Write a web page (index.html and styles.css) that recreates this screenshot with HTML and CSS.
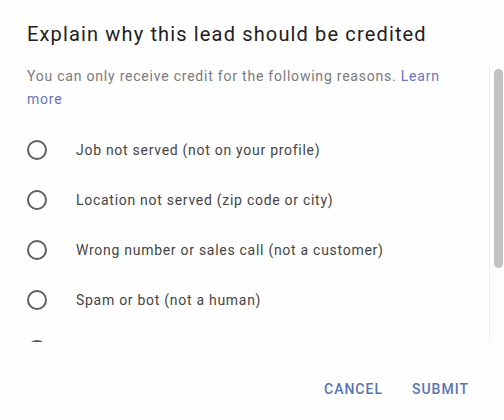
FILE: index.html
```html
<!DOCTYPE html>
<html lang="en">
<head>
<meta charset="utf-8">
<title>Explain why this lead should be credited</title>
<link rel="stylesheet" href="styles.css">
</head>
<body>
<div class="dialog">
  <h1 class="dialog-title">Explain why this lead should be credited</h1>
  <div class="dialog-body">
    <div class="scroll-content">
      <p class="intro">You can only receive credit for the following reasons. <a href="#" class="link">Learn more</a></p>
      <ul class="reasons">
        <li class="reason"><span class="radio"></span><span class="reason-label">Job not served (not on your profile)</span></li>
        <li class="reason"><span class="radio"></span><span class="reason-label">Location not served (zip code or city)</span></li>
        <li class="reason"><span class="radio"></span><span class="reason-label">Wrong number or sales call (not a customer)</span></li>
        <li class="reason"><span class="radio"></span><span class="reason-label">Spam or bot (not a human)</span></li>
        <li class="reason"><span class="radio"></span></li>
      </ul>
    </div>
    <div class="scrollbar"><div class="scrollbar-thumb"></div></div>
  </div>
  <div class="dialog-actions">
    <button class="action" type="button">Cancel</button>
    <button class="action" type="button">Submit</button>
  </div>
</div>
</body>
</html>
```
FILE: styles.css
```css
html, body {
  margin: 0;
  padding: 0;
  background: #ffffff;
}

body {
  font-family: Roboto, "Liberation Sans", Arial, sans-serif;
  width: 504px;
  height: 420px;
  overflow: hidden;
}

.dialog {
  display: flex;
  flex-direction: column;
  height: 420px;
  background: #fefefe;
}

.dialog-title {
  margin: 0;
  padding: 20px 0 15px 27px;
  font-size: 20px;
  line-height: 28px;
  font-weight: 400;
  letter-spacing: 1.15px;
  color: #212121;
}

/* scrolling region: list on the left, scrollbar on the right */
.dialog-body {
  display: flex;
  height: 279px;
  flex: none;
}

.scroll-content {
  flex: 1;
  overflow: hidden;
  padding-top: 2px;
}

.scrollbar {
  flex: none;
  width: 15px;
  border-left: 1px solid #eeeeee;
  background: #fdfdfd;
  padding-top: 6px;
  box-sizing: border-box;
}

.scrollbar-thumb {
  width: 9px;
  height: 199px;
  margin-left: 4px;
  border-radius: 5px;
  background: #c2c2c2;
}

.intro {
  margin: 0;
  padding: 0 22px 0 27px;
  font-size: 14px;
  line-height: 23px;
  letter-spacing: 0.78px;
  color: #7a7a7a;
}

.link {
  color: #6674c2;
  text-decoration: none;
}

.reasons {
  list-style: none;
  margin: 14px 0 0 0;
  padding: 0;
}

.reason {
  display: flex;
  align-items: center;
  gap: 29px;
  height: 50px;
  padding-left: 27px;
}

.radio {
  flex: none;
  width: 20px;
  height: 20px;
  box-sizing: border-box;
  border: 2px solid #5f5f5f;
  border-radius: 50%;
}

.reason-label {
  font-size: 14px;
  letter-spacing: 0.72px;
  color: #454545;
}

.dialog-actions {
  flex: 1;
  display: flex;
  justify-content: flex-end;
  align-items: center;
  gap: 13px;
  padding: 16px 27px 0 0;
}

.action {
  border: 0;
  background: none;
  padding: 8px;
  font-family: inherit;
  font-size: 14px;
  font-weight: 500;
  letter-spacing: 1px;
  text-transform: uppercase;
  color: #5875b8;
  cursor: pointer;
}
```
